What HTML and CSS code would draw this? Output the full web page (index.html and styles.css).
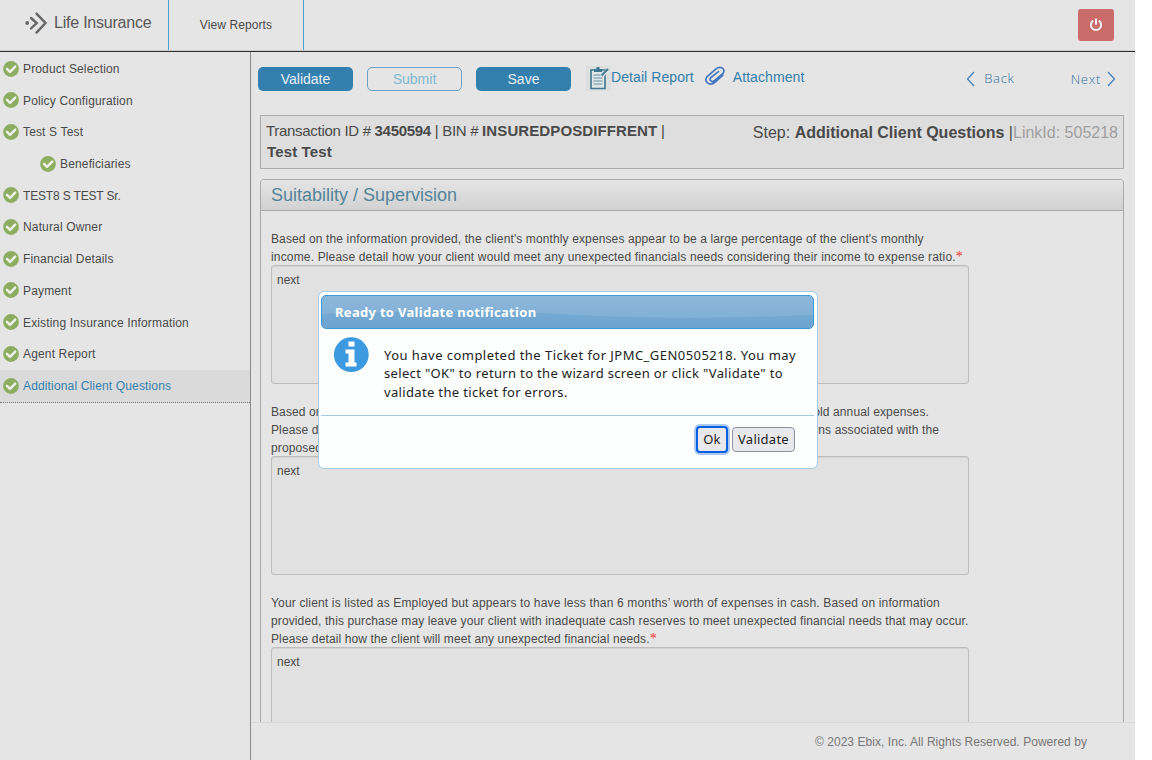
FILE: index.html
```html
<!DOCTYPE html>
<html lang="en">
<head>
<meta charset="utf-8">
<title>Life Insurance</title>
<link rel="stylesheet" href="styles.css">
</head>
<body>
<svg class="defs" width="0" height="0" aria-hidden="true">
  <symbol id="check" viewBox="0 0 16 16"><circle cx="8" cy="8" r="7.9" fill="#8dae60"/><path d="M4 7.9l3 3 5.2-5.3" fill="none" stroke="#eef0ea" stroke-width="2.5" stroke-linecap="round" stroke-linejoin="round"/></symbol>
</svg>
<div class="app">
  <header class="topbar">
    <div class="brand">
      <svg class="brand-icon" width="24" height="24" viewBox="0 0 24 24" fill="none" stroke="#666" stroke-width="2.4" stroke-linecap="round"><circle cx="3.2" cy="12" r="1.9" fill="#666" stroke="none"/><path d="M7 7l5.7 5L7 17.5"/><path d="M12.5 2.6L21.5 12l-9 9.6"/></svg>
      <span class="brand-name">Life Insurance</span>
    </div>
    <a class="nav-item"><span class="nav-label">View Reports</span></a>
    <button class="power"><svg width="14" height="14" viewBox="0 0 14 14" fill="none" stroke="#eee" stroke-width="2"><path d="M4.2 2.7a5.1 5.1 0 1 0 5.6 0M7 .5v6.2"/></svg></button>
  </header>
  <div class="body">
    <nav class="sidebar">
      <a class="step"><svg><use href="#check"/></svg><span>Product Selection</span></a>
      <a class="step"><svg><use href="#check"/></svg><span>Policy Configuration</span></a>
      <a class="step"><svg><use href="#check"/></svg><span>Test S Test</span></a>
      <a class="step child"><svg><use href="#check"/></svg><span>Beneficiaries</span></a>
      <a class="step caps"><svg><use href="#check"/></svg><span>TEST8 S TEST Sr.</span></a>
      <a class="step"><svg><use href="#check"/></svg><span>Natural Owner</span></a>
      <a class="step"><svg><use href="#check"/></svg><span>Financial Details</span></a>
      <a class="step"><svg><use href="#check"/></svg><span>Payment</span></a>
      <a class="step"><svg><use href="#check"/></svg><span>Existing Insurance Information</span></a>
      <a class="step"><svg><use href="#check"/></svg><span>Agent Report</span></a>
      <a class="step active"><svg><use href="#check"/></svg><span>Additional Client Questions</span></a>
    </nav>
    <main class="main">
      <div class="content">
        <div class="toolbar">
          <button class="btn">Validate</button>
          <button class="btn outline">Submit</button>
          <button class="btn">Save</button>
          <a class="tool"><svg class="report-icon" width="25" height="25" viewBox="0 0 25 25"><path fill="#dcdfdf" d="M0 0h25v25H0z"/><path d="M5 4h14v18.5H5z" fill="#dfe6e8" stroke="#3d7790" stroke-width="1.6"/><path d="M8 3h2.5V1h3v2H16v3H8z" fill="#3d7790"/><path d="M7.5 9h7M7.5 12h9M7.5 15h9M7.5 18h9" stroke="#6e929f" stroke-width="1.2"/><path d="M16 10l5-5.500" stroke="#dfe6e8" stroke-width="3.400"/><path d="M15.500 9.500L22 3" stroke="#3d7790" stroke-width="1.800"/></svg><span>Detail Report</span></a>
          <a class="tool attach"><svg width="22" height="20" viewBox="0 0 22 20" fill="none" stroke="#4477bd" stroke-width="1.7" stroke-linecap="round"><path d="M18.800 9l-7.600 7C5.500 20.800-1 15.500 3.200 10.500L12 2.800c4.500-3.600 10.200.300 7 4.700l-8.200 7c-3 2.500-6.400-.4-3.900-2.900l7.500-6"/></svg><span>Attachment</span></a>
          <div class="pager">
            <a><svg width="9" height="16" viewBox="0 0 9 16"><path d="M8 1L1.500 8 8 15"/></svg><span>Back</span></a>
            <a><span class="next-label">Next</span><svg width="9" height="16" viewBox="0 0 9 16"><path d="M1 1l6.500 7L1 15"/></svg></a>
          </div>
        </div>
        <section class="ticket">
          <div class="ticket-id"><div>Transaction ID # <b>3450594</b> | BIN # <b class="bin">INSUREDPOSDIFFRENT</b> |</div><b class="client">Test Test</b></div>
          <div class="ticket-step">Step: <b>Additional Client Questions</b> |<span class="link-id">LinkId: 505218</span></div>
        </section>
        <section class="panel">
          <h2 class="panel-title">Suitability / Supervision</h2>
          <div class="questions">
            <div class="question">
              <div class="line">Based on the information provided, the client's monthly expenses appear to be a large percentage of the client's monthly</div>
              <div class="line wide">income. Please detail how your client would meet any unexpected financials needs considering their income to expense ratio.<i class="req">*</i></div>
              <div class="answer">next</div>
            </div>
            <div class="question">
              <div class="line split first"><span>Based on</span><span>household annual expenses.</span></div>
              <div class="line split second"><span>Please detail</span><span>concerns associated with the</span></div>
              <div class="line">proposed</div>
              <div class="answer">next</div>
            </div>
            <div class="question">
              <div class="line wide">Your client is listed as Employed but appears to have less than 6 months’ worth of expenses in cash. Based on information</div>
              <div class="line">provided, this purchase may leave your client with inadequate cash reserves to meet unexpected financial needs that may occur.</div>
              <div class="line">Please detail how the client will meet any unexpected financial needs.<i class="req">*</i></div>
              <div class="answer">next</div>
            </div>
          </div>
        </section>
      </div>
      <footer class="footer">© 2023 Ebix, Inc. All Rights Reserved. Powered by</footer>
    </main>
  </div>
</div>
<div class="dialog" role="dialog">
  <div class="dialog-title"><svg class="gloss" viewBox="0 0 491 32" preserveAspectRatio="none"><path d="M0 18C90 15 170 15 220 17C310 23 400 23 491 19V32H0z" fill="#5c9acb" fill-opacity=".4"/></svg><span class="dialog-title-text">Ready to Validate notification</span></div>
  <div class="dialog-body">
    <svg width="36" height="36" viewBox="0 0 36 36"><circle cx="18.300" cy="17.700" r="17.400" fill="#3e9ae0"/><path d="M15.500 4.500h6v5h-6zM12.500 12.500h9v13h2v4H12.500v-4h3v-9h-3z" fill="#fff"/></svg>
    <div class="message"><div class="m1">You have completed the Ticket for JPMC_GEN0505218. You may</div><div class="m2">select "OK" to return to the wizard screen or click "Validate" to</div><div class="m3">validate the ticket for errors.</div></div>
  </div>
  <div class="dialog-actions"><button class="dbtn focus">Ok</button><button class="dbtn">Validate</button></div>
</div>
</body>
</html>
```
FILE: styles.css
```css
* { box-sizing: border-box; }
body { margin: 0; height: 760px; overflow: hidden; background: #fff; font: 12px/17.6px "Liberation Sans", Arial, sans-serif; color: #4a4a4a; }
button { font-family: inherit; padding: 0; }
.defs { position: absolute; }
.app { width: 1135px; height: 760px; background: #e5e5e5; display: flex; flex-direction: column; }

.topbar { height: 52px; display: flex; border-bottom: 1px solid #2e2e2e; box-shadow: inset 0 -1px #cdcdcd; flex: none; }
.brand { width: 169px; height: 50px; border-right: 1px solid #4a9fcf; display: flex; padding-left: 24px; }
.brand-icon { margin-top: 11px; }
.brand-name { font-size: 16px; line-height: 20px; margin: 13px 0 0 6px; color: #585858; white-space: nowrap; letter-spacing: -.22px; }
.nav-item { width: 135px; height: 50px; border-right: 1px solid #4a9fcf; text-align: center; line-height: 50px; letter-spacing: .1px; }
.power { width: 36px; height: 32px; margin: 9px 21px 0 auto; background: #ca6c69; border: 0; border-radius: 3px; display: flex; align-items: center; justify-content: center; }

.body { flex: 1; display: flex; min-height: 0; }
.sidebar { width: 251px; border-right: 1px solid #888; padding-top: 1px; letter-spacing: .15px; }
.step { height: 31.7px; display: flex; align-items: center; padding-left: 3px; gap: 4px; }
.step svg { width: 16px; height: 16px; flex: none; margin-top: -.5px; }
.step span { padding-top: 2px; }
.child { padding-left: 40px; }
.caps { letter-spacing: -.16px; }
.active { height: 33px; background: #dadada; color: #337fae; border-bottom: 1px dotted #777; }
.active span { padding-top: 1.4px; }

.main { flex: 1; min-width: 0; display: flex; flex-direction: column; }
.content { height: 670px; overflow: hidden; padding: 0 11px 0 9px; }
.toolbar { display: flex; height: 63px; padding-top: 15px; margin-left: -2px; }
.btn { width: 95px; height: 24px; margin-right: 14px; border: 0; border-radius: 5px; background: #3380af; color: #e8eef2; font-size: 14px; line-height: 24px; flex: none; }
.outline { background: transparent; border: 1px solid #6ba2c4; color: #7db8d0; line-height: 22px; }
.tool { display: flex; color: #337fae; font-size: 14px; line-height: 20px; white-space: nowrap; letter-spacing: .08px; }
.report-icon { margin: -1px 0 0 1px; }
.attach svg { margin: -1px 7px 0 10px; }
.pager { margin-left: auto; margin-right: 8px; display: flex; gap: 56px; font: 300 13px/22px "Open Sans", sans-serif; letter-spacing: .75px; color: #33709f; }
.pager a { display: flex; align-items: center; height: 24px; gap: 9px; }
.pager span { padding-bottom: 2px; }
.pager .next-label { padding-bottom: 0; }
.pager a + a { gap: 6px; }
.pager path { fill: none; stroke: #4383be; stroke-width: 1.3; }

.ticket { height: 54px; border: 1px solid #ababab; background: #dedede; display: flex; justify-content: space-between; padding: 4px 5px; white-space: nowrap; }
.ticket-id { font-size: 15px; line-height: 21px; letter-spacing: -.3px; }
.bin { letter-spacing: .1px; }
.client { margin-left: 1px; letter-spacing: .14px; }
.ticket-step { font-size: 16px; line-height: 25px; }
.link-id { color: #9e9e9e; }

.panel { margin-top: 10px; border: 1px solid #aaa; border-radius: 4px 4px 0 0; height: 620px; }
.panel-title { margin: 0; height: 31px; border-bottom: 1px solid #aaa; border-radius: 3px 3px 0 0; background: linear-gradient(#e4e4e4, #d2d2d2); padding-left: 10px; font-weight: 400; font-size: 18px; line-height: 30px; color: #548499; }
.questions { padding: 20px 0 0 10px; }
.question { margin-bottom: 20.2px; }
.line { height: 17.6px; white-space: nowrap; letter-spacing: .12px; }
.wide { letter-spacing: .16px; }
.question .line:nth-last-child(2) { height: 16.6px; }
.split { display: flex; justify-content: space-between; }
.first { width: 658px; }
.second { width: 668px; }
.req { color: #e33; font: 14px/10px "Liberation Serif", serif; }
.answer { width: 698px; height: 119px; border: 1px solid #bdbdbd; border-radius: 3px; background: #e1e1e1; box-shadow: inset 0 1px 1px #d2d2d2; padding: 5.6px 5px; }
.footer { flex: 1; border-top: 1px solid #d8d8d8; padding: 11px 48px 0 0; text-align: right; color: #777; letter-spacing: .05px; }

.dialog { position: absolute; left: 318px; top: 291px; width: 500px; height: 178px; border: 1px solid #a3c9e3; border-radius: 6px; background: #fcfffe; padding: 3px 3px 0 2px; color: #222; font: 13px/18.4px "Noto Sans", sans-serif; }
.dialog-title { position: relative; height: 34px; border: 1px solid #4297d7; border-radius: 5px; background: linear-gradient(#8ab6da, #85b3d7 50%, #78acd6); overflow: hidden; padding-left: 13px; line-height: 33px; font-weight: 700; color: #fff; letter-spacing: .3px; }
.gloss { position: absolute; inset: 0; width: 100%; height: 100%; }
.dialog-title-text { position: relative; }
.dialog-body { height: 87px; border-bottom: 1px solid #a3c9e3; padding: 8px 0 0 12px; display: flex; }
.message { margin: 9px 0 0 15px; white-space: nowrap; }
.m1 { letter-spacing: .46px; }
.m2, .m3 { letter-spacing: .34px; }
.dialog-actions { display: flex; justify-content: flex-end; padding: 11px 19px 0 0; gap: 4px; }
.dbtn { width: 63px; height: 25px; border: 1px solid #8f8f9d; border-radius: 4px; background: #e9e9ed; font-size: 13px; line-height: 21px; color: #222; letter-spacing: .25px; }
.focus { width: 32px; height: 27px; margin-top: -1px; border: 2px solid #0060df; box-shadow: 0 0 0 2px #aac8f2; }
```
